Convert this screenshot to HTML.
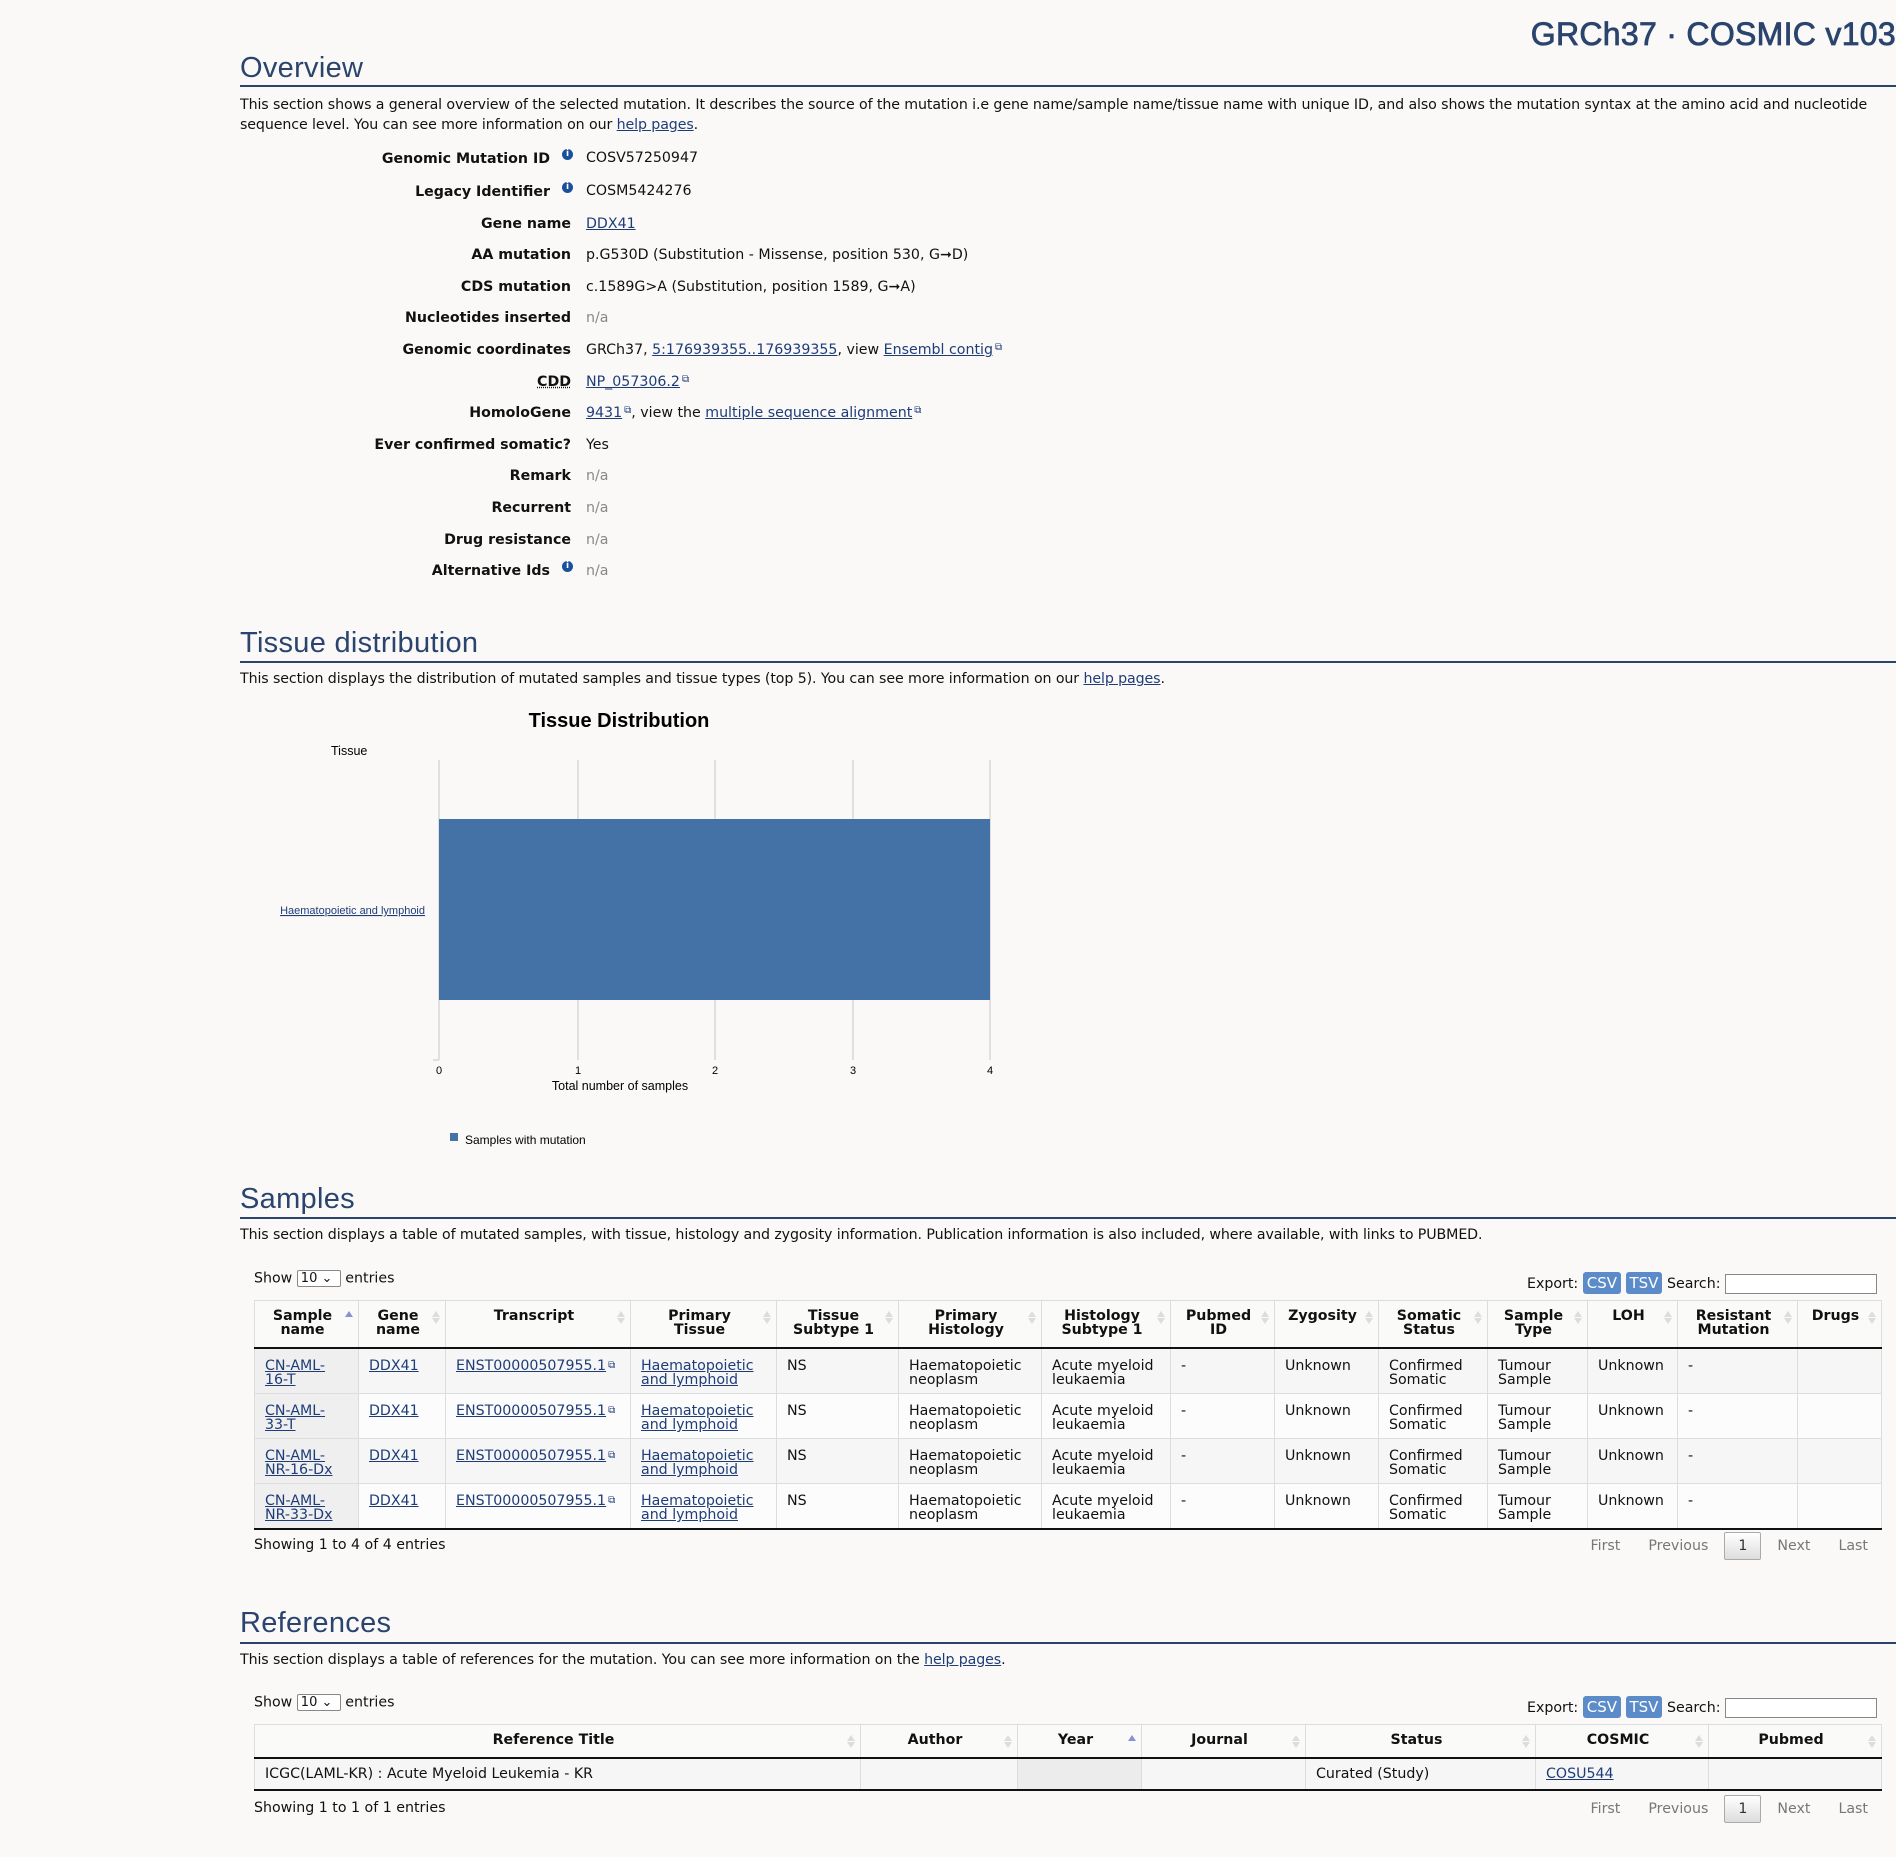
<!DOCTYPE html>
<html><head><meta charset="utf-8"><style>
body{margin:0;width:1896px;height:1857px;background:#faf9f8;font-family:"DejaVu Sans","Liberation Sans",sans-serif;font-size:14.2px;color:#111;position:relative;overflow:hidden}
.a{position:absolute}
a{color:#1e3d78;text-decoration:underline}
h2{position:absolute;margin:0;left:240px;font-family:"Liberation Sans",sans-serif;font-weight:normal;font-size:29px;color:#2a446e;letter-spacing:0.3px}
.rule{position:absolute;left:240px;right:0;height:2px;background:#2a446e}
p.d{position:absolute;left:240px;right:10px;margin:0;line-height:20px;letter-spacing:-0.1px}
.lab{position:absolute;right:1325px;font-weight:bold;text-align:right;white-space:nowrap}
.val{position:absolute;left:586px;white-space:nowrap}
.na{color:#888}
.i{display:inline-block;width:11px;height:11px;border-radius:50%;background:#1a4f9c;color:#fff;font-size:9px;line-height:11px;text-align:center;font-weight:bold;vertical-align:top;margin-left:5px}
.ext{font-size:10px;vertical-align:top;color:#1e3d78;margin-left:2px}
table{position:absolute;border-collapse:collapse;left:254px;table-layout:fixed;font-size:14.2px}
th{font-weight:bold;line-height:14px;padding:8px 16px 10px 8px;border-right:1px solid #ddd;border-top:1px solid #ddd;text-align:center;vertical-align:top;position:relative;background:#fafaf9}
th:after{content:"";position:absolute;right:5px;top:17px;width:0;height:0;border-left:4px solid transparent;border-right:4px solid transparent;border-top:6px solid #ddd}
th:before{content:"";position:absolute;right:5px;top:10px;width:0;height:0;border-left:4px solid transparent;border-right:4px solid transparent;border-bottom:6px solid #ddd}
th.s:before{border-bottom-color:#8a8fd8}th.s:after{display:none}
thead tr{border-bottom:2px solid #111}
td{line-height:14px;padding:10px 8px 6px 10px;vertical-align:top;border-right:1px solid #ddd;border-top:1px solid #ddd}
tbody tr:nth-child(odd){background:#f6f6f6}
tbody tr:nth-child(even){background:#fcfcfc}
tbody tr td.c1{background:#efefef;padding-right:22px}
tbody{border-bottom:2px solid #111}
th:first-child,td:first-child{border-left:1px solid #ddd}
.btn{display:inline-block;background:#5b8cc9;color:#fff;border-radius:3px;padding:2px 4px;font-size:15px}
.inp{display:inline-block;width:150px;height:18px;border:1px solid #888;vertical-align:middle;background:#fff}
.sel{display:inline-block;border:1px solid #888;border-radius:2px;font-size:13px;padding:0 3px;width:36px;background:#fff;vertical-align:middle}
.pag{position:absolute;right:28px;color:#777;font-size:14.2px}
.pag span{margin-left:28px}
.pag b{font-weight:normal;color:#333;display:inline-block;border:1px solid #aaa;background:linear-gradient(#fff,#ddd);padding:5px 13px;margin-left:16px;margin-right:-12px;border-radius:2px}
</style></head><body>

<div class="a" style="right:0;top:16px;font-family:'Liberation Sans',sans-serif;font-size:32px;color:#2a446e;letter-spacing:0.3px;-webkit-text-stroke:0.8px #2a446e">GRCh37 · COSMIC v103</div>

<h2 style="top:52px">Overview</h2><div class="rule" style="top:85px"></div>
<p class="d" style="top:95px">This section shows a general overview of the selected mutation. It describes the source of the mutation i.e gene name/sample name/tissue name with unique ID, and also shows the mutation syntax at the amino acid and nucleotide sequence level. You can see more information on our <a>help pages</a>.</p>

<div class="lab" style="top:151px;right:1346px">Genomic Mutation ID</div><span class="i a" style="top:149px;left:557px">i</span><div class="val" style="top:150px">COSV57250947</div>
<div class="lab" style="top:184px;right:1346px">Legacy Identifier</div><span class="i a" style="top:182px;left:557px">i</span><div class="val" style="top:183px">COSM5424276</div>
<div class="lab" style="top:216px">Gene name</div><div class="val" style="top:216px"><a>DDX41</a></div>
<div class="lab" style="top:247px">AA mutation</div><div class="val" style="top:247px">p.G530D (Substitution - Missense, position 530, G➞D)</div>
<div class="lab" style="top:279px">CDS mutation</div><div class="val" style="top:279px">c.1589G&gt;A (Substitution, position 1589, G➞A)</div>
<div class="lab" style="top:310px">Nucleotides inserted</div><div class="val na" style="top:310px">n/a</div>
<div class="lab" style="top:342px">Genomic coordinates</div><div class="val" style="top:342px">GRCh37, <a>5:176939355..176939355</a>, view <a>Ensembl contig</a><span class="ext">⧉</span></div>
<div class="lab" style="top:374px;text-decoration:underline dotted">CDD</div><div class="val" style="top:374px"><a>NP_057306.2</a><span class="ext">⧉</span></div>
<div class="lab" style="top:405px">HomoloGene</div><div class="val" style="top:405px"><a>9431</a><span class="ext">⧉</span>, view the <a>multiple sequence alignment</a><span class="ext">⧉</span></div>
<div class="lab" style="top:437px">Ever confirmed somatic?</div><div class="val" style="top:437px">Yes</div>
<div class="lab" style="top:468px">Remark</div><div class="val na" style="top:468px">n/a</div>
<div class="lab" style="top:500px">Recurrent</div><div class="val na" style="top:500px">n/a</div>
<div class="lab" style="top:532px">Drug resistance</div><div class="val na" style="top:532px">n/a</div>
<div class="lab" style="top:563px;right:1346px">Alternative Ids</div><span class="i a" style="top:561px;left:557px">i</span><div class="val na" style="top:563px">n/a</div>

<h2 style="top:627px">Tissue distribution</h2><div class="rule" style="top:661px"></div>
<p class="d" style="top:669px">This section displays the distribution of mutated samples and tissue types (top 5). You can see more information on our <a>help pages</a>.</p>

<svg class="a" style="left:0;top:0" width="1896" height="1857" font-family="Liberation Sans, sans-serif">
<text x="619" y="727" font-size="20" font-weight="bold" text-anchor="middle">Tissue Distribution</text>
<text x="331" y="755" font-size="12.5">Tissue</text>
<g stroke="#d8d8d8" stroke-width="1.5">
<line x1="439" y1="760" x2="439" y2="1060"/><line x1="578" y1="760" x2="578" y2="1060"/><line x1="715" y1="760" x2="715" y2="1060"/><line x1="853" y1="760" x2="853" y2="1060"/><line x1="990" y1="760" x2="990" y2="1060"/><line x1="433" y1="1060" x2="439" y2="1060"/></g>
<rect x="439" y="819" width="551" height="181" fill="#4472a6"/>
<text x="425" y="914" font-size="11" fill="#1e3d78" text-anchor="end" text-decoration="underline">Haematopoietic and lymphoid</text>
<g font-size="11" text-anchor="middle"><text x="439" y="1074">0</text><text x="578" y="1074">1</text><text x="715" y="1074">2</text><text x="853" y="1074">3</text><text x="990" y="1074">4</text></g>
<text x="620" y="1090" font-size="12.5" text-anchor="middle">Total number of samples</text>
<rect x="450" y="1133" width="8" height="8" fill="#4472a6"/>
<text x="465" y="1144" font-size="12">Samples with mutation</text>
</svg>

<h2 style="top:1183px">Samples</h2><div class="rule" style="top:1217px"></div>
<p class="d" style="top:1225px">This section displays a table of mutated samples, with tissue, histology and zygosity information. Publication information is also included, where available, with links to PUBMED.</p>

<div class="a" style="left:254px;top:1270px">Show <span class="sel">10 ⌄</span> entries</div>
<div class="a" style="right:19px;top:1272px">Export: <span class="btn">CSV</span> <span class="btn">TSV</span> Search: <span class="inp"></span></div>

<table style="top:1300px;width:1627px">
<colgroup><col style="width:104px"><col style="width:87px"><col style="width:185px"><col style="width:146px"><col style="width:122px"><col style="width:143px"><col style="width:129px"><col style="width:104px"><col style="width:104px"><col style="width:109px"><col style="width:100px"><col style="width:90px"><col style="width:120px"><col style="width:84px"></colgroup>
<thead><tr><th class="s">Sample name</th><th>Gene name</th><th>Transcript</th><th>Primary<br>Tissue</th><th>Tissue Subtype 1</th><th>Primary Histology</th><th>Histology Subtype 1</th><th>Pubmed ID</th><th>Zygosity</th><th>Somatic Status</th><th>Sample Type</th><th>LOH</th><th>Resistant Mutation</th><th>Drugs</th></tr></thead>
<tbody>
<tr><td class="c1"><a>CN-AML-<br>16-T</a></td><td><a>DDX41</a></td><td><a>ENST00000507955.1</a><span class="ext">⧉</span></td><td><a>Haematopoietic and lymphoid</a></td><td>NS</td><td>Haematopoietic neoplasm</td><td>Acute myeloid leukaemia</td><td>-</td><td>Unknown</td><td>Confirmed Somatic</td><td>Tumour Sample</td><td>Unknown</td><td>-</td><td></td></tr>
<tr><td class="c1"><a>CN-AML-<br>33-T</a></td><td><a>DDX41</a></td><td><a>ENST00000507955.1</a><span class="ext">⧉</span></td><td><a>Haematopoietic and lymphoid</a></td><td>NS</td><td>Haematopoietic neoplasm</td><td>Acute myeloid leukaemia</td><td>-</td><td>Unknown</td><td>Confirmed Somatic</td><td>Tumour Sample</td><td>Unknown</td><td>-</td><td></td></tr>
<tr><td class="c1"><a>CN-AML-<br>NR-16-Dx</a></td><td><a>DDX41</a></td><td><a>ENST00000507955.1</a><span class="ext">⧉</span></td><td><a>Haematopoietic and lymphoid</a></td><td>NS</td><td>Haematopoietic neoplasm</td><td>Acute myeloid leukaemia</td><td>-</td><td>Unknown</td><td>Confirmed Somatic</td><td>Tumour Sample</td><td>Unknown</td><td>-</td><td></td></tr>
<tr><td class="c1"><a>CN-AML-<br>NR-33-Dx</a></td><td><a>DDX41</a></td><td><a>ENST00000507955.1</a><span class="ext">⧉</span></td><td><a>Haematopoietic and lymphoid</a></td><td>NS</td><td>Haematopoietic neoplasm</td><td>Acute myeloid leukaemia</td><td>-</td><td>Unknown</td><td>Confirmed Somatic</td><td>Tumour Sample</td><td>Unknown</td><td>-</td><td></td></tr>
</tbody></table>

<div class="a" style="left:254px;top:1537px">Showing 1 to 4 of 4 entries</div>
<div class="pag" style="top:1532px"><span>First</span><span>Previous</span><b>1</b><span>Next</span><span>Last</span></div>

<h2 style="top:1607px">References</h2><div class="rule" style="top:1642px"></div>
<p class="d" style="top:1650px">This section displays a table of references for the mutation. You can see more information on the <a>help pages</a>.</p>

<div class="a" style="left:254px;top:1694px">Show <span class="sel">10 ⌄</span> entries</div>
<div class="a" style="right:19px;top:1696px">Export: <span class="btn">CSV</span> <span class="btn">TSV</span> Search: <span class="inp"></span></div>

<table style="top:1724px;width:1627px">
<colgroup><col style="width:606px"><col style="width:157px"><col style="width:124px"><col style="width:164px"><col style="width:230px"><col style="width:173px"><col style="width:173px"></colgroup>
<thead><tr><th>Reference Title</th><th>Author</th><th class="s">Year</th><th>Journal</th><th>Status</th><th>COSMIC</th><th>Pubmed</th></tr></thead>
<tbody><tr><td style="padding:8px 8px 7px 10px;line-height:15px">ICGC(LAML-KR) : Acute Myeloid Leukemia - KR</td><td></td><td style="background:#ececec"></td><td></td><td style="padding:8px 8px 7px 10px;line-height:15px">Curated (Study)</td><td style="padding:8px 8px 7px 10px;line-height:15px"><a>COSU544</a></td><td></td></tr></tbody>
</table>

<div class="a" style="left:254px;top:1800px">Showing 1 to 1 of 1 entries</div>
<div class="pag" style="top:1795px"><span>First</span><span>Previous</span><b>1</b><span>Next</span><span>Last</span></div>

</body></html>
